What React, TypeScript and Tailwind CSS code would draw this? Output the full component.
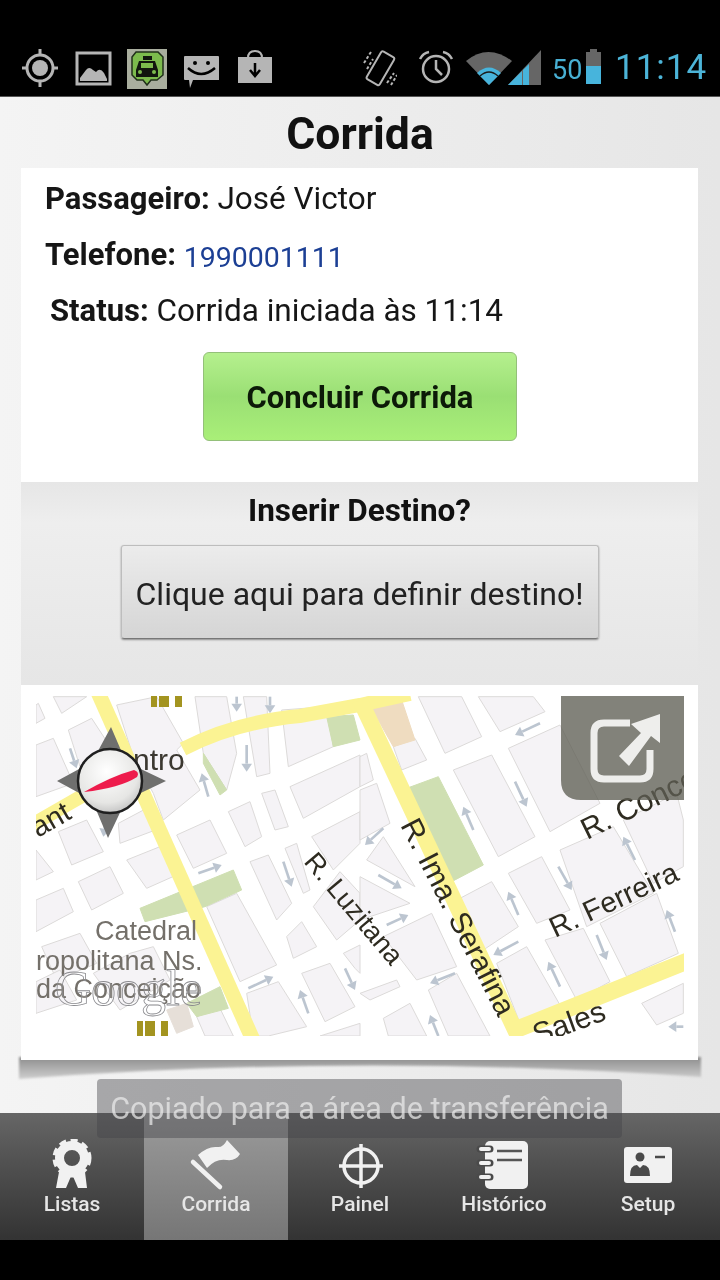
import React from "react";

const road = "#fbf393";
const block = "#f5f3f6";
const blockEdge = "#dcdad9";
const green = "#cfdfb2";

const left: number[][] = [
  [100,50,200,50,125,100],[48,130,75,115,55,70,48,75],[145,150,215,115,290,230,180,260],[48,195,100,175,160,310,48,350],
  [290,75,410,50,490,190,470,210,540,330,430,420,400,340,340,230],[670,50,740,50,750,280,710,290],[525,50,620,50,650,220,620,330,550,220],
  [785,90,920,80,940,200,805,260],[810,320,1020,225,1020,320,850,415],[725,340,765,330,805,440,765,450],[625,395,690,365,725,470,675,500],
  [470,465,570,420,620,520,520,565],[320,540,420,500,470,585,380,625],[115,455,200,420,250,515,155,555],[295,430,380,385,420,445,300,490],[48,510,100,575,48,600],
  [175,605,270,560,310,640,215,690],[48,660,130,625,160,695,48,755],[875,470,1020,395,1020,490,940,570],[795,505,830,490,870,630,850,640],
  [690,545,745,525,815,670,770,720],[800,770,845,725,890,800,820,835],[880,680,960,575,1020,640,1020,720,950,780],[845,880,930,850,1005,980,915,1025],
  [560,680,650,640,770,855,660,905],[680,940,775,905,860,1040,745,1068,700,1068],[65,800,180,760,230,850,110,900],[970,820,1020,795,1020,880,1005,865],
  [48,905,120,870,170,960,48,1000],[220,880,330,820,400,800,450,900,300,990],[530,1010,600,985,640,1068,555,1068],[900,1068,1020,1030,1020,1068]
];
const right: number[][] = [
  [175,50,305,50,365,170,255,220],[355,50,520,50,555,95,420,155],[445,205,600,135,720,370,570,455],[280,270,395,225,525,470,415,530],
  [100,200,165,175,200,240,125,270],[600,510,760,440,880,640,680,740],[445,580,545,530,630,690,530,730],[790,420,950,340,970,420,970,560,880,610],
  [300,655,395,605,475,740,370,810],[720,730,890,640,955,820,800,890],[555,780,670,745,750,905,650,960],[410,850,500,800,600,975,480,1030],
  [205,930,290,880,390,1068,265,1068],[70,1015,150,970,200,1068,85,1068],[70,770,215,700,290,860,170,900],[0,940,110,900,120,920,30,960],
  [20,540,70,470,165,620],[0,590,150,670,0,720],[845,970,970,910,970,1000,890,1035],[0,330,50,310,90,430,0,480],[0,230,20,220,40,300,0,320]
];
const arrowsL: number[][] = [
  [650,50,650,95],[750,50,750,100],[680,195,680,275],[150,205,170,265],[565,350,545,280],[390,360,395,410],[535,580,605,555],
  [790,545,815,620],[570,765,590,840],[685,925,760,890],[865,1000,840,930],[975,865,1005,930],[255,440,250,470]
];
const arrowsR: number[][] = [
  [540,130,465,165],[465,305,500,380],[340,450,310,380],[70,445,15,495],[55,585,125,625],[80,735,145,705],[595,560,635,630],[475,705,445,635],
  [825,540,790,470],[475,785,400,825],[285,880,210,910],[710,765,740,840],[600,920,565,845],[945,755,920,690],[235,1068,210,1005],[970,1040,925,1040]
];

function Arrow({ a, w }: { a: number[]; w: number }) {
  const [x1, y1, x2, y2] = a;
  const l = Math.hypot(x2 - x1, y2 - y1);
  const ux = (x2 - x1) / l;
  const uy = (y2 - y1) / l;
  const bx = x2 - ux * 24;
  const by = y2 - uy * 24;
  return (
    <g>
      <line x1={x1} y1={y1} x2={bx} y2={by} stroke="#bcc5d0" strokeWidth={w} />
      <polygon points={`${x2},${y2} ${bx - uy * 16},${by + ux * 16} ${bx + uy * 16},${by - ux * 16}`} fill="#bcc5d0" />
    </g>
  );
}

function Poly({ p, fill = block, stroke = blockEdge }: { p: number[]; fill?: string; stroke?: string }) {
  return <polygon points={p.join(" ")} fill={fill} stroke={stroke} strokeWidth={3} />;
}

function Temple({ x, y, h }: { x: number; y: number; h: number }) {
  return (
    <g fill="#a39420">
      <rect x={x} y={y} width={6} height={h} />
      <rect x={x + 8} y={y} width={5} height={h} />
      <path d={`M${x + 13} ${y} h5 v${h} h-5z`} />
      <rect x={x + 24} y={y} width={7} height={h} />
    </g>
  );
}

function MapView() {
  return (
    <svg viewBox="36 696 648 340" className="block w-[648px] h-[340px] ml-[15px] mt-[11px] bg-white" fontFamily="'Liberation Sans', Arial, sans-serif">
      <defs>
        <radialGradient id="cg" cx="45%" cy="35%" r="70%">
          <stop offset="0" stopColor="#ffffff" />
          <stop offset="0.7" stopColor="#e6e6e4" />
          <stop offset="1" stopColor="#bdbdbd" />
        </radialGradient>
      </defs>
      <g transform="translate(20 680) scale(0.33333)">
        {left.map((p, i) => <Poly key={i} p={p} />)}
        <Poly p={[550, 220, 620, 330, 600, 345, 550, 250]} fill={green} stroke={green} />
        <Poly p={[920, 110, 1000, 105, 1020, 180, 940, 200]} fill={green} stroke={green} />
        <Poly p={[360, 685, 640, 570, 665, 630, 555, 680, 375, 725]} fill={green} stroke={green} />
        <Poly p={[500, 970, 600, 920, 625, 985, 530, 1010]} fill={green} stroke={green} />
        <Poly p={[440, 990, 500, 970, 520, 1040, 470, 1060]} fill="#e6dfd8" stroke="#e6dfd8" />
        {arrowsL.map((a, i) => <Arrow key={i} a={a} w={8} />)}
      </g>
      <g transform="translate(360 680) scale(0.33333)">
        {right.map((p, i) => <Poly key={i} p={p} />)}
        <Poly p={[35, 85, 125, 60, 165, 180, 100, 200]} fill="#efdcc0" stroke="#efdcc0" />
        <Poly p={[140, 325, 235, 290, 370, 555, 275, 605]} fill={green} stroke={green} />
        {arrowsR.map((a, i) => <Arrow key={i} a={a} w={8} />)}
      </g>
      <g fill="none" stroke={road} strokeWidth={15}>
        <path d="M97 690 L253 1040" />
        <path d="M183 749 Q235 722 300 716 L360 705 L410 694" strokeWidth={14} />
        <path d="M360 700 L517 1034" strokeWidth={16} />
        <path d="M510 1032 L690 960" strokeWidth={17} />
        <path d="M30 826 L96 788" strokeWidth={14} />
      </g>
      <Temple x={151} y={696} h={11} />
      <Temple x={137} y={1021} h={15} />
      <g fill="#2e2b20">
        <text x="133" y="770" fill="#3b3830" fontSize={30}>ntro</text>
        <text transform="translate(38 838) rotate(-30)" fontSize={29}>ant</text>
        <text transform="translate(400 825) rotate(63)" fontSize={30}>R. Ima. Serafina</text>
        <text transform="translate(303 862) rotate(50)" fontSize={27}>R. Luzitana</text>
        <text transform="translate(587 840) rotate(-26)" fontSize={30}>R. Conce</text>
        <text transform="translate(555 938) rotate(-25)" fontSize={29}>R. Ferreira</text>
        <text transform="translate(537 1045) rotate(-20)" fontSize={30}>Sales</text>
      </g>
      <g fill="#74706a" fontSize={27}>
        <text x="95" y="940">Catedral</text>
        <text x="36" y="970">ropolitana Ns.</text>
        <text x="36" y="998">da Conceição</text>
      </g>
      <text x="55" y="1005" fontFamily="'Liberation Serif', serif" fontSize={50} fill="rgba(255,255,255,0.15)" stroke="#8a8a8e" strokeWidth={0.8}>Google</text>
      <polygon points="111,727 126,762 166,781 126,800 108,838 92,800 57,781 92,762" fill="#6f6f6e" />
      <circle cx="110" cy="781" r="32" fill="url(#cg)" stroke="#1f1f1f" strokeWidth={2.5} />
      <path d="M84 792 Q112 776 134 770 Q140 772 137 777 Q120 788 84 792Z" fill="#ee1c4c" />
      <path d="M561 696 H684 V800 H581 Q561 800 561 780Z" fill="rgba(95,95,85,0.78)" />
      <path d="M630 723 H604 Q594 723 594 733 V769 Q594 779 604 779 H640 Q650 779 650 769 V750" fill="none" stroke="#eeeeec" strokeWidth={7} />
      <path d="M619 756 L641 733 L631 724 L660 714 V743 L651 736 L629 766Z" fill="#eeeeec" />
    </svg>
  );
}

function Status() {
  const g = "#b5b5b5";
  return (
    <div className="h-[97px] border-b border-[#555] bg-black flex items-start pt-[49px] pl-[22px] font-['Roboto',sans-serif]">
      <svg width="36" height="38" viewBox="0 0 36 38" fill="none" stroke={g} className="shrink-0">
        <circle cx="18" cy="19" r="13" strokeWidth="3" /><circle cx="18" cy="19" r="8" fill={g} stroke="none" />
        <path d="M18 0v7M18 31v7M0 19h6M30 19h6" strokeWidth="3" />
      </svg>
      <svg width="38" height="36" viewBox="0 0 38 36" className="ml-[17px] mt-[1px] shrink-0">
        <rect x="2" y="3" width="33" height="31" fill="none" stroke={g} strokeWidth="3" />
        <path d="M5 28 L11 20 Q14 16 18 20 L21 22 Q25 17 29 23 L32 29 V31 H5Z" fill={g} />
      </svg>
      <svg width="40" height="40" viewBox="0 0 40 40" className="ml-[14px] shrink-0">
        <rect width="40" height="40" fill="#a9ae9e" />
        <path d="M9 3 H31 L36 8 V26 L30 31 H24 L20 36 L16 31 H10 L5 26 V8Z" fill="#7cbb4d" stroke="#20301a" strokeWidth="1.5" />
        <rect x="16" y="7" width="9" height="4" fill="#11160e" />
        <path d="M12 12 H28 L31 21 V28 H9 V21Z" fill="#11160e" />
        <rect x="14" y="14" width="12" height="5" fill="#7cbb4d" />
        <circle cx="13" cy="23" r="2" fill="#7cbb4d" /><circle cx="27" cy="23" r="2" fill="#7cbb4d" />
      </svg>
      <svg width="36" height="36" viewBox="0 0 36 36" className="ml-[16px] mt-[5px] shrink-0">
        <path d="M2 2 H35 Q36 2 36 3 V26 H10 L7 34 L6 26 H2 Q1 26 1 25 V3 Q1 2 2 2Z" fill={g} />
        <circle cx="12" cy="9" r="2" fill="#000" /><circle cx="25" cy="9" r="2" fill="#000" />
        <path d="M5 14 Q18 26 32 14" fill="none" stroke="#000" strokeWidth="2.5" />
      </svg>
      <svg width="36" height="36" viewBox="0 0 36 36" className="ml-[18px] shrink-0">
        <path d="M11 9 Q11 2 18 2 Q25 2 25 9" fill="none" stroke={g} strokeWidth="2" />
        <rect x="1" y="8" width="34" height="26" fill={g} />
        <path d="M18 14 V26 M13 21 L18 27 L23 21" fill="none" stroke="#000" strokeWidth="2.5" />
      </svg>
      <svg width="34" height="38" viewBox="0 0 34 38" className="ml-[90px] shrink-0" fill="none" stroke={g} strokeWidth="2">
        <rect x="10" y="3" width="15" height="32" rx="2" transform="rotate(30 17 19)" />
        <path d="M1 14 L8 3 M4 20 L10 10 M24 34 L31 24 M28 36 L34 26" strokeDasharray="3 2" />
      </svg>
      <svg width="36" height="36" viewBox="0 0 36 36" className="ml-[21px] shrink-0" fill="none" stroke={g}>
        <circle cx="18" cy="20" r="13" strokeWidth="2.5" />
        <path d="M18 11 V20 L24 26" strokeWidth="2.5" />
        <path d="M2 10 Q5 4 11 3 M34 10 Q31 4 25 3" strokeWidth="2.5" />
      </svg>
      <svg width="76" height="38" viewBox="0 0 76 38" className="ml-[12px] shrink-0">
        <path d="M0 12 Q22 -6 46 12 L23 36Z" fill="#666" />
        <path d="M11 24 Q23 13 35 24 L23 36Z" fill="#47b4dc" />
        <path d="M14 27 Q23 19 32 27" fill="none" stroke="#1a1a1a" strokeWidth="1.5" />
        <path d="M75 1 V36 H42Z" fill="#666" />
        <path d="M56 22 V36 H42Z" fill="#47b4dc" />
        <path d="M57 21 L63 15 V36 H57Z" fill="#47b4dc" />
      </svg>
      <span className="ml-[10px] mt-[5px] text-[#48b0d4] text-[27px] leading-[32px] w-[30px]">50</span>
      <svg width="15" height="36" viewBox="0 0 15 36" className="ml-[4px] shrink-0">
        <rect x="4" y="0" width="7" height="3" fill="#666" />
        <rect x="0" y="3" width="15" height="14" fill="#666" />
        <rect x="0" y="17" width="15" height="18" fill="#47b4dc" />
      </svg>
      <span className="ml-[14px] -mt-[1px] text-[#4cb4d8] text-[35px] leading-[40px] tracking-[1px] whitespace-nowrap">11:14</span>
    </div>
  );
}

function NavItem({ label, active, children }: { label: string; active?: boolean; children: React.ReactNode }) {
  return (
    <div className={active ? "w-[144px] flex flex-col items-center pt-[26px] bg-gradient-to-b from-[#9b9b9b] to-[#767676]" : "w-[144px] flex flex-col items-center pt-[26px]"}>
      <div className="h-[52px] w-[60px]">{children}</div>
      <span className="text-[21px] leading-[26px] font-medium text-[#e6e6e6]">{label}</span>
    </div>
  );
}

function Nav() {
  const w = "#f1f1f1";
  return (
    <div className="h-[127px] flex bg-gradient-to-b from-[#666666] to-[#333333]">
      <NavItem label="Listas">
        <svg viewBox="0 0 60 52" className="w-[60px] h-[52px]">
          <path d="M17 33 L14 49 L24 49 L30 35 L36 49 L45 49 L43 33Z" fill={w} />
          <circle cx="30" cy="19" r="12.5" fill="none" stroke={w} strokeWidth="9" />
          <circle cx="30" cy="19" r="17.5" fill="none" stroke={w} strokeWidth="4" strokeDasharray="7 4.5" />
        </svg>
      </NavItem>
      <NavItem label="Corrida" active>
        <svg viewBox="0 0 60 52" className="w-[60px] h-[52px]">
          <path d="M7 23 L34 48" stroke={w} strokeWidth="4.5" strokeLinecap="round" />
          <path d="M12 16 Q22 7 31 8 Q37 9 41 1 L54 15 Q50 22 41 21 Q30 19 21 29Z" fill={w} />
        </svg>
      </NavItem>
      <NavItem label="Painel">
        <svg viewBox="0 0 60 52" className="w-[60px] h-[52px]" fill="none" stroke={w}>
          <circle cx="31" cy="27" r="17" strokeWidth="3.5" />
          <path d="M31 5 V49 M9 27 H53" strokeWidth="3.5" />
        </svg>
      </NavItem>
      <NavItem label="Histórico">
        <svg viewBox="0 0 60 52" className="w-[60px] h-[52px]">
          <rect x="11" y="2" width="43" height="48" rx="5" fill={w} />
          <path d="M6 10 H16 M6 24 H16 M6 38 H16" stroke="#4a4a4a" strokeWidth="7" strokeLinecap="round" />
          <path d="M7 10 H15 M7 24 H15 M7 38 H15" stroke={w} strokeWidth="4" strokeLinecap="round" />
          <path d="M23 12 H48 M23 21 H48" stroke="#555" strokeWidth="2.5" />
        </svg>
      </NavItem>
      <NavItem label="Setup">
        <svg viewBox="0 0 60 52" className="w-[60px] h-[52px]">
          <rect x="6" y="8" width="48" height="36" rx="3" fill={w} />
          <circle cx="22" cy="18" r="4.5" fill="#4a4a4a" />
          <path d="M12 37 Q12 26 19 26 L22 29 L25 26 Q32 26 32 37Z" fill="#4a4a4a" />
          <path d="M37 18 H47" stroke="#4a4a4a" strokeWidth="2.5" />
        </svg>
      </NavItem>
    </div>
  );
}

export default function App() {
  return (
    <div className="relative w-[720px] h-[1280px] overflow-hidden bg-black font-['Roboto',sans-serif] text-[#161616] blur-[0.5px]">
      <Status />
      <div className="relative h-[1016px] bg-gradient-to-r from-[#f4f4f4] to-[#e6e6e6] overflow-hidden">
        <h1 className="h-[71px] pt-[9px] text-center text-[44.5px] leading-[56px] font-bold text-[#111]">Corrida</h1>
        <div className="relative ml-[21px] w-[677px]">
          <svg viewBox="0 0 682 28" className="absolute -left-[2px] top-[889px] w-[682px] h-[28px] blur-[1px]">
            <defs>
              <linearGradient id="sh" x1="0" x2="0" y1="0" y2="1">
                <stop offset="0" stopColor="#8d8d8d" />
                <stop offset="1" stopColor="#cfcfcf" />
              </linearGradient>
            </defs>
            <path d="M0 0 H682 V20 Q340 -4 0 22Z" fill="url(#sh)" />
          </svg>
          <div className="relative bg-white h-[892px]">
            <div className="h-[314px] relative">
              <p className="absolute left-[24px] top-[13px] text-[31.5px] leading-[36px] whitespace-nowrap"><b className="font-bold text-[31px]">Passageiro:</b> José Victor</p>
              <p className="absolute left-[24px] top-[69px] text-[31px] leading-[36px] whitespace-nowrap"><b className="font-bold">Telefone:</b> <span className="relative top-[2px] text-[#1c3f94] text-[28.5px]">1990001111</span></p>
              <p className="absolute left-[29px] top-[125px] text-[31.5px] leading-[36px] whitespace-nowrap"><b className="font-bold text-[31px]">Status:</b> Corrida iniciada às 11:14</p>
              <div className="absolute left-[182px] top-[184px] w-[314px] h-[89px] pt-[4px] rounded-[6px] border border-[#94c07a] bg-gradient-to-b from-[#b5f08e] via-[#9adf74] to-[#a9ef78] flex items-center justify-center text-[31px] font-bold text-[#0c1a08]">Concluir Corrida</div>
            </div>
            <div className="h-[203px] bg-gradient-to-b from-[#e6e6e6] via-[#eeeeee] via-20% to-[#e6e6e6] flex flex-col items-center pt-[10px]">
              <p className="text-[31.5px] leading-[38px] font-bold text-[#111]">Inserir Destino?</p>
              <div className="mt-[15px] w-[478px] h-[94px] pt-[3px] rounded-[3px] border border-[#bdbdbd] border-b-[#777] bg-gradient-to-b from-[#ececec] to-[#d5d5d5] shadow-[0_1px_2px_rgba(0,0,0,0.4)] flex items-center justify-center text-[32px] text-[#222] whitespace-nowrap">Clique aqui para definir destino!</div>
            </div>
            <MapView />
          </div>
        </div>
      </div>
      <Nav />
      <div className="absolute left-[97px] top-[1079px] w-[525px] h-[59px] rounded-[4px] bg-[rgba(68,68,72,0.43)] flex items-center justify-center text-[30.5px] text-[rgba(235,235,235,0.72)] whitespace-nowrap">Copiado para a área de transferência</div>
    </div>
  );
}
